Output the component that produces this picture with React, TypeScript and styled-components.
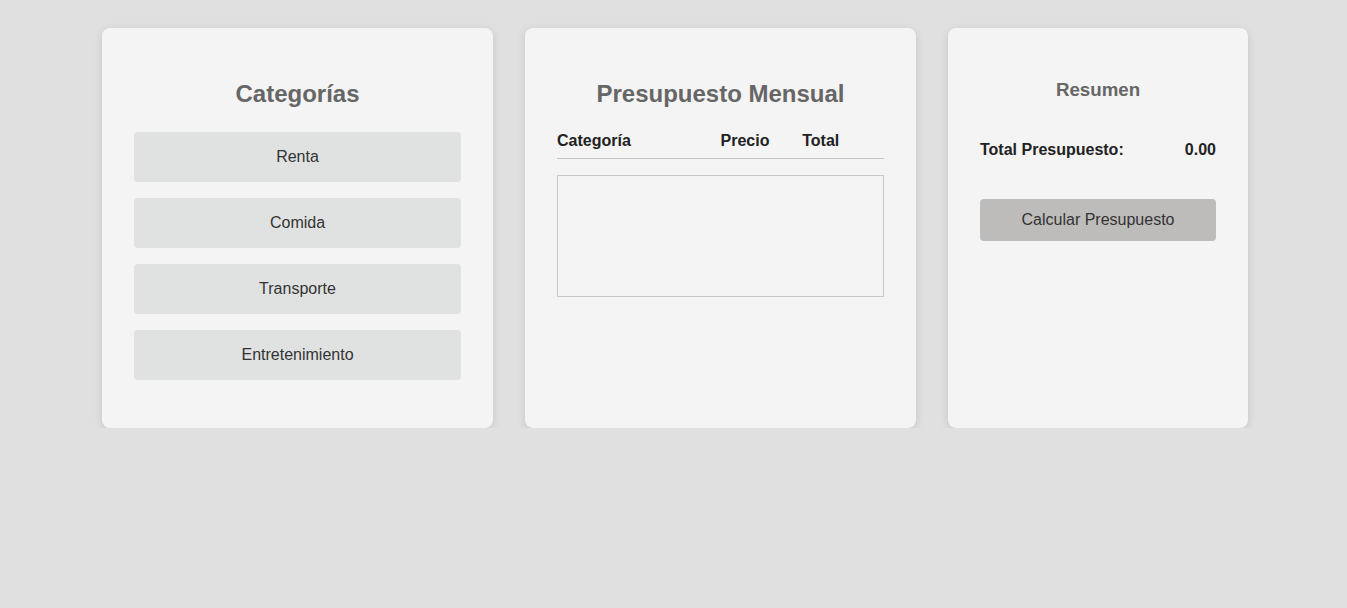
import styled, { createGlobalStyle } from 'styled-components';

const GlobalStyle = createGlobalStyle`
  html, body {
    margin: 0;
    padding: 0;
    background: #dfe0df;
    font-family: "Liberation Sans", Arial, sans-serif;
    color: #333;
  }
`;

const categories = ['Renta', 'Comida', 'Transporte', 'Entretenimiento'];

export default function App() {
  return (
    <>
      <GlobalStyle />
      <Page>
        <Card $width={391}>
          <Title>Categorías</Title>
          <CategoryList>
            {categories.map(name => (
              <CategoryButton key={name}>{name}</CategoryButton>
            ))}
          </CategoryList>
        </Card>
        <Card $width={391}>
          <Title>Presupuesto Mensual</Title>
          <TableHead>
            <span>Categoría</span>
            <span>Precio</span>
            <span>Total</span>
          </TableHead>
          <TableBody />
        </Card>
        <Card $width={300}>
          <SubTitle>Resumen</SubTitle>
          <TotalRow>
            <span>Total Presupuesto:</span>
            <span>0.00</span>
          </TotalRow>
          <CalcButton>Calcular Presupuesto</CalcButton>
        </Card>
      </Page>
    </>
  );
}

const Page = styled.div`
  display: flex;
  justify-content: center;
  align-items: flex-start;
  gap: 32px;
  padding: 28px 0 0 3px;
`;

const Card = styled.div<{ $width: number }>`
  box-sizing: border-box;
  width: ${({ $width }) => $width}px;
  height: 400px;
  padding: 32px;
  background: #f4f4f4;
  border-radius: 8px;
  box-shadow: 0 2px 8px rgba(0, 0, 0, 0.12);
  display: flex;
  flex-direction: column;
`;

const Title = styled.h2`
  margin: 20px 0 24px;
  font-size: 24px;
  line-height: 28px;
  font-weight: bold;
  color: #666;
  text-align: center;
`;

const SubTitle = styled.h3`
  margin: 19px 0 0;
  font-size: 18.72px;
  line-height: 22px;
  font-weight: bold;
  color: #666;
  text-align: center;
`;

const CategoryList = styled.div`
  display: flex;
  flex-direction: column;
  gap: 16px;
`;

const CategoryButton = styled.button`
  height: 50px;
  border: none;
  border-radius: 4px;
  background: #e0e2e1;
  color: #333;
  font-family: inherit;
  font-size: 16px;
  cursor: pointer;
`;

const TableHead = styled.div`
  display: grid;
  grid-template-columns: 2fr 1fr 1fr;
  padding-bottom: 8px;
  border-bottom: 1px solid #c4c4c4;
  font-size: 16px;
  line-height: 18px;
  font-weight: bold;
  color: #222;
`;

const TableBody = styled.div`
  margin-top: 16px;
  height: 122px;
  box-sizing: border-box;
  border: 1px solid #c8c8c8;
`;

const TotalRow = styled.div`
  display: flex;
  justify-content: space-between;
  margin-top: 40px;
  font-size: 16px;
  line-height: 18px;
  font-weight: bold;
  color: #222;
`;

const CalcButton = styled.button`
  margin-top: 40px;
  height: 42px;
  border: none;
  border-radius: 4px;
  background: #bdbcbb;
  color: #333;
  font-family: inherit;
  font-size: 16px;
  cursor: pointer;
`;
